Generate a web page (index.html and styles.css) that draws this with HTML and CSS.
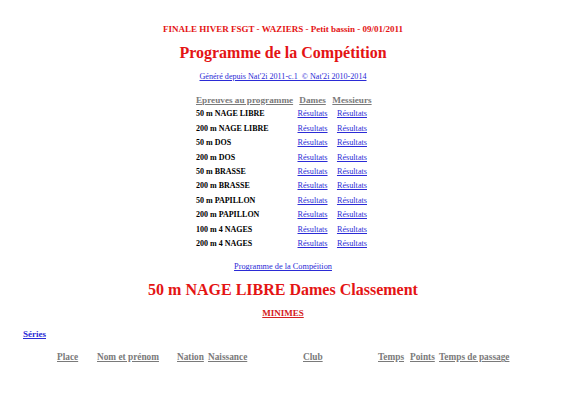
FILE: index.html
```html
<!DOCTYPE html>
<html lang="fr">
<head>
<meta charset="utf-8">
<title>Programme de la Compétition</title>
<link rel="stylesheet" href="styles.css">
</head>
<body>
<div class="page">
  <div class="meet">FINALE HIVER FSGT - WAZIERS - Petit bassin - 09/01/2011</div>
  <div class="title">Programme de la Compétition</div>
  <div class="gen"><a href="#">Généré depuis Nat'2i 2011-c.1 &nbsp;© Nat'2i 2010-2014</a></div>
  <table class="prog">
    <thead>
      <tr><th class="ev">Epreuves au programme</th><th>Dames</th><th>Messieurs</th></tr>
    </thead>
    <tbody>
      <tr><td class="ev">50 m NAGE LIBRE</td><td><a href="#">Résultats</a></td><td><a href="#">Résultats</a></td></tr>
      <tr><td class="ev">200 m NAGE LIBRE</td><td><a href="#">Résultats</a></td><td><a href="#">Résultats</a></td></tr>
      <tr><td class="ev">50 m DOS</td><td><a href="#">Résultats</a></td><td><a href="#">Résultats</a></td></tr>
      <tr><td class="ev">200 m DOS</td><td><a href="#">Résultats</a></td><td><a href="#">Résultats</a></td></tr>
      <tr><td class="ev">50 m BRASSE</td><td><a href="#">Résultats</a></td><td><a href="#">Résultats</a></td></tr>
      <tr><td class="ev">200 m BRASSE</td><td><a href="#">Résultats</a></td><td><a href="#">Résultats</a></td></tr>
      <tr><td class="ev">50 m PAPILLON</td><td><a href="#">Résultats</a></td><td><a href="#">Résultats</a></td></tr>
      <tr><td class="ev">200 m PAPILLON</td><td><a href="#">Résultats</a></td><td><a href="#">Résultats</a></td></tr>
      <tr><td class="ev">100 m 4 NAGES</td><td><a href="#">Résultats</a></td><td><a href="#">Résultats</a></td></tr>
      <tr><td class="ev">200 m 4 NAGES</td><td><a href="#">Résultats</a></td><td><a href="#">Résultats</a></td></tr>
    </tbody>
  </table>
  <div class="back"><a href="#">Programme de la Compéition</a></div>
  <div class="event">50 m NAGE LIBRE Dames Classement</div>
  <div class="cat">MINIMES</div>
  <div class="series"><a href="#">Séries</a></div>
  <div class="cols">
    <span>Place</span>
    <span>Nom et prénom</span>
    <span>Nation</span>
    <span>Naissance</span>
    <span>Club</span>
    <span>Temps</span>
    <span>Points</span>
    <span>Temps de passage</span>
  </div>
</div>
</body>
</html>
```
FILE: styles.css
```css
html, body {
  margin: 0;
  padding: 0;
  background: #ffffff;
}
body {
  font-family: "Liberation Serif", "Times New Roman", serif;
  color: #000;
}
a {
  color: #2b2bd6;
}
.page {
  padding-top: 23px;
}
.meet {
  text-align: center;
  color: #e41414;
  font-weight: bold;
  font-size: 9px;
  line-height: 12px;
}
.title {
  margin-top: 7px;
  text-align: center;
  color: #e41414;
  font-weight: bold;
  font-size: 16px;
  line-height: 22px;
}
.gen {
  margin-top: 8px;
  text-align: center;
  font-size: 8.1px;
  line-height: 10px;
}
.prog {
  margin: 11px auto 0;
  border-collapse: collapse;
  font-size: 8.2px;
  position: relative;
  left: 2px;
}
.prog th, .prog td {
  padding: 0 2.4px;
  line-height: 14.4px;
  text-align: center;
  white-space: nowrap;
}
.prog th {
  color: #7a7a7a;
  font-size: 9.2px;
  text-decoration: underline;
  font-weight: bold;
}
.prog .ev {
  text-align: left;
  padding-left: 0;
  padding-right: 2px;
}
.prog td.ev {
  font-weight: bold;
  font-size: 8px;
}
.back {
  margin-top: 11px;
  text-align: center;
  font-size: 8.3px;
  line-height: 10px;
}
.event {
  margin-top: 8px;
  text-align: center;
  color: #e41414;
  font-weight: bold;
  font-size: 16px;
  line-height: 20px;
}
.cat {
  margin-top: 8px;
  text-align: center;
  color: #d42020;
  font-weight: bold;
  font-size: 9px;
  line-height: 10px;
  text-decoration: underline;
}
.series {
  margin-top: 11px;
  padding-left: 23px;
  font-weight: bold;
  font-size: 9px;
  line-height: 10px;
}
.cols {
  margin-top: 13px;
  padding-left: 57px;
  display: grid;
  grid-template-columns: 40px 80px 31px 95px 75px 32px 29px auto;
  font-weight: bold;
  font-size: 9.3px;
  line-height: 10px;
  color: #7a7a7a;
}
.cols span {
  text-decoration: underline;
  white-space: nowrap;
}
```
